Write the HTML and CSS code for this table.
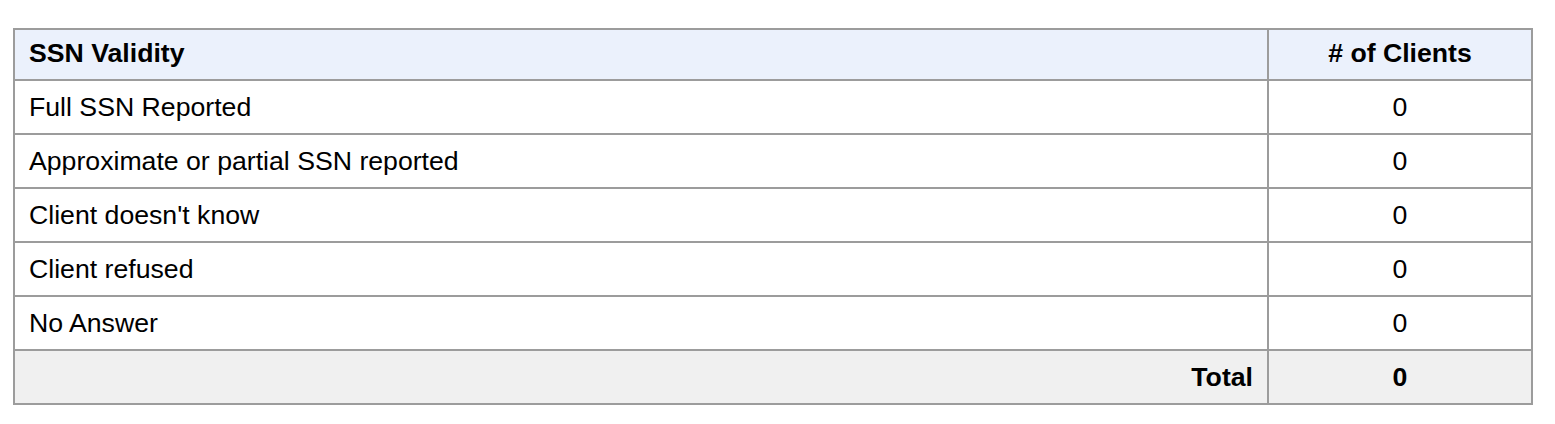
FILE: index.html
```html
<!DOCTYPE html>
<html lang="en">
<head>
<meta charset="utf-8">
<title>SSN Validity</title>
<link rel="stylesheet" href="styles.css">
</head>
<body>
<div class="wrap">
  <table class="report">
    <thead>
      <tr>
        <th class="label-col">SSN Validity</th>
        <th class="num-col"># of Clients</th>
      </tr>
    </thead>
    <tbody>
      <tr><td class="label">Full SSN Reported</td><td class="num">0</td></tr>
      <tr><td class="label">Approximate or partial SSN reported</td><td class="num">0</td></tr>
      <tr><td class="label">Client doesn't know</td><td class="num">0</td></tr>
      <tr><td class="label">Client refused</td><td class="num">0</td></tr>
      <tr><td class="label">No Answer</td><td class="num">0</td></tr>
    </tbody>
    <tfoot>
      <tr class="total"><td class="total-label">Total</td><td class="num total-num">0</td></tr>
    </tfoot>
  </table>
</div>
</body>
</html>
```

FILE: styles.css
```css
html, body {
  margin: 0;
  padding: 0;
  background: #ffffff;
}
.wrap {
  padding: 28px 22px 0 13px;
}
.report {
  width: 1520px;
  border-collapse: collapse;
  font-family: "Liberation Sans", Arial, Helvetica, sans-serif;
  font-size: 26.67px;
  color: #000;
}
.report th,
.report td {
  border: 2px solid #9c9c9c;
  line-height: 30px;
  padding: 11px 14px;
}
.report th {
  background: #ebf1fc;
  font-weight: bold;
  padding-top: 8px;
  padding-bottom: 11px;
}
.label-col { text-align: left; }
.num-col { text-align: center; width: 234px; }
.label { text-align: left; }
.num { text-align: center; }
.total td {
  background: #f0f0f0;
  font-weight: bold;
}
.total-label { text-align: right; }
```
